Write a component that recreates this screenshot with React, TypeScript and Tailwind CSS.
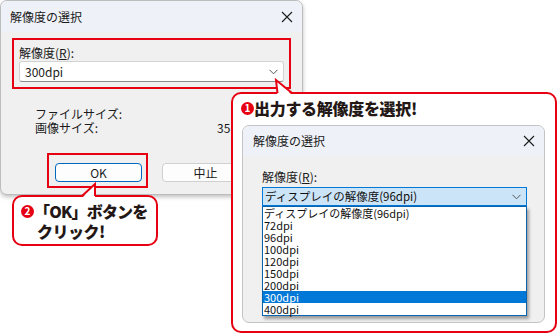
const JP = { fontFamily: '"Noto Sans CJK JP", "Noto Sans", sans-serif' };

const CloseIcon = () => (
  <svg width="12" height="12" viewBox="0 0 12 12" className="block">
    <path d="M1 1 L11 11 M11 1 L1 11" stroke="#1b1b1b" strokeWidth="1.1" fill="none" />
  </svg>
);

const Chevron = () => (
  <svg width="9" height="6" viewBox="0 0 9 6" className="block">
    <path d="M0.5 0.8 L4.5 4.8 L8.5 0.8" stroke="#555" strokeWidth="1" fill="none" />
  </svg>
);

const Num = ({ n }: { n: string }) => (
  <span className="flex h-[13px] w-[13px] shrink-0 items-center justify-center rounded-full bg-[#e60012] text-[10px] leading-none font-bold text-white">
    {n}
  </span>
);

const TitleBar = ({ className }: { className: string }) => (
  <div className={`flex items-center justify-between bg-[#eef2f8] ${className}`}>
    <span className="text-[12px] leading-none text-[#1b1b1b]">解像度の選択</span>
    <CloseIcon />
  </div>
);

const OPTIONS = [
  "ディスプレイの解像度(96dpi)",
  "72dpi",
  "96dpi",
  "100dpi",
  "120dpi",
  "150dpi",
  "200dpi",
  "300dpi",
  "400dpi",
];

const BackDialog = () => (
  <div className="absolute left-0 top-0 flex h-[195px] w-[303px] flex-col overflow-hidden rounded-[7px] border border-[#bdbdbd] bg-[#f0f0f0] shadow-[0_2px_4px_rgba(0,0,0,0.25)]">
    <TitleBar className="h-[31px] pl-[9px] pr-[9px]" />
    <div className="flex flex-col px-[11px] pt-[6px]">
      {/* highlighted resolution field */}
      <div className="flex h-[51px] flex-col border-2 border-[#e60012] px-[5px] pt-[4px]">
        <div className="h-[17px] text-[12px] leading-[17px] text-[#1b1b1b]">
          解像度(<u>R</u>):
        </div>
        <div className="flex h-[21px] items-center justify-between rounded-[3px] border border-[#d3d3d3] border-b-[#8a8a8a] bg-white pl-[5px] pr-[5px]">
          <span className="text-[12px] leading-none text-[#1b1b1b]">300dpi</span>
          <Chevron />
        </div>
      </div>

      <div className="mt-[18px] flex flex-col pl-[23px] text-[12px] leading-[14px] text-[#1b1b1b]">
        <div>ファイルサイズ:</div>
        <div className="flex">
          <span className="w-[182px]">画像サイズ:</span>
          <span>35</span>
        </div>
      </div>

      <div className="mt-[18px] flex items-start pl-[35px]">
        <div className="h-[35px] w-[101px] border-2 border-[#e60012] pl-[6px] pt-[8px]">
          <div className="flex h-[19px] w-[87px] items-center justify-center rounded-[4px] border border-[#0067c0] bg-[#fdfdfd] text-[12px] leading-none text-[#1b1b1b]">
            OK
          </div>
        </div>
        <div className="ml-[14px] mt-[10px] flex h-[19px] w-[87px] shrink-0 items-center justify-center rounded-[4px] border border-[#d0d0d0] bg-[#fdfdfd] text-[12px] leading-none text-[#1b1b1b]">
          中止
        </div>
      </div>
    </div>
  </div>
);

const FrontDialog = () => (
  <div className="ml-[1px] mt-[7px] flex h-[198px] w-[303px] flex-col overflow-hidden rounded-[7px] border border-[#c4c4c4] bg-[#f0f0f0]">
    <TitleBar className="h-[30px] pl-[10px] pr-[9px]" />
    <div className="flex flex-col pl-[19px] pr-[17px] pt-[12px]">
      <div className="h-[17px] text-[12px] leading-[17px] text-[#1b1b1b]">
        解像度(<u>R</u>):
      </div>
      <div className="mt-[2px] flex h-[19px] items-center justify-between border border-[#0078d7] bg-[#cce4f7] pl-[2px] pr-[5px]">
        <span className="text-[11.5px] leading-none text-[#111]">{OPTIONS[0]}</span>
        <Chevron />
      </div>
      <div className="flex flex-col border border-[#0a64ad] bg-white shadow-[2px_3px_3px_rgba(0,0,0,0.35)]">
        {OPTIONS.map((o) => (
          <div
            key={o}
            className={`h-[12px] pl-[1px] text-[11px] leading-[12px] ${
              o === "300dpi" ? "bg-[#0078d7] text-white" : "text-[#111]"
            }`}
          >
            {o}
          </div>
        ))}
      </div>
    </div>
  </div>
);

export default function App() {
  return (
    <div className="relative h-[336px] w-[560px] overflow-hidden bg-white" style={JP}>
      <BackDialog />

      {/* callout 1 */}
      <div className="absolute left-[231px] top-[92px] flex h-[241px] w-[326px] flex-col rounded-[10px] border-2 border-[#e60012] bg-white pl-[8px] pt-[4px]">
        <div className="flex h-[20px] items-center">
          <Num n="1" />
          <span className="text-[16px] leading-[20px] font-black tracking-[-0.3px] text-[#231815]">
            出力する解像度を選択!
          </span>
        </div>
        <FrontDialog />
      </div>

      {/* callout 2 */}
      <div className="absolute left-[12px] top-[195px] flex h-[51px] w-[146px] flex-col rounded-[10px] border-2 border-[#e60012] bg-white pl-[7px] pt-[4px] text-[16px] leading-[20px] font-black text-[#231815]">
        <div className="flex items-center">
          <Num n="2" />
          <span className="tracking-[-0.8px]">「OK」ボタンを</span>
        </div>
        <div className="pl-[16px] tracking-[-0.5px]">クリック!</div>
      </div>

      {/* callout tails */}
      <svg className="absolute left-0 top-0" width="560" height="336" viewBox="0 0 560 336">
        <polygon points="277.5,95 276,80 292,95" fill="#fff" />
        <polyline points="277.5,93 276,80 292,93" fill="none" stroke="#e60012" strokeWidth="2" />
        <polygon points="82,198 95,184 95,198" fill="#fff" />
        <polyline points="82,196 95,184 95,196" fill="none" stroke="#e60012" strokeWidth="2" />
      </svg>
    </div>
  );
}
